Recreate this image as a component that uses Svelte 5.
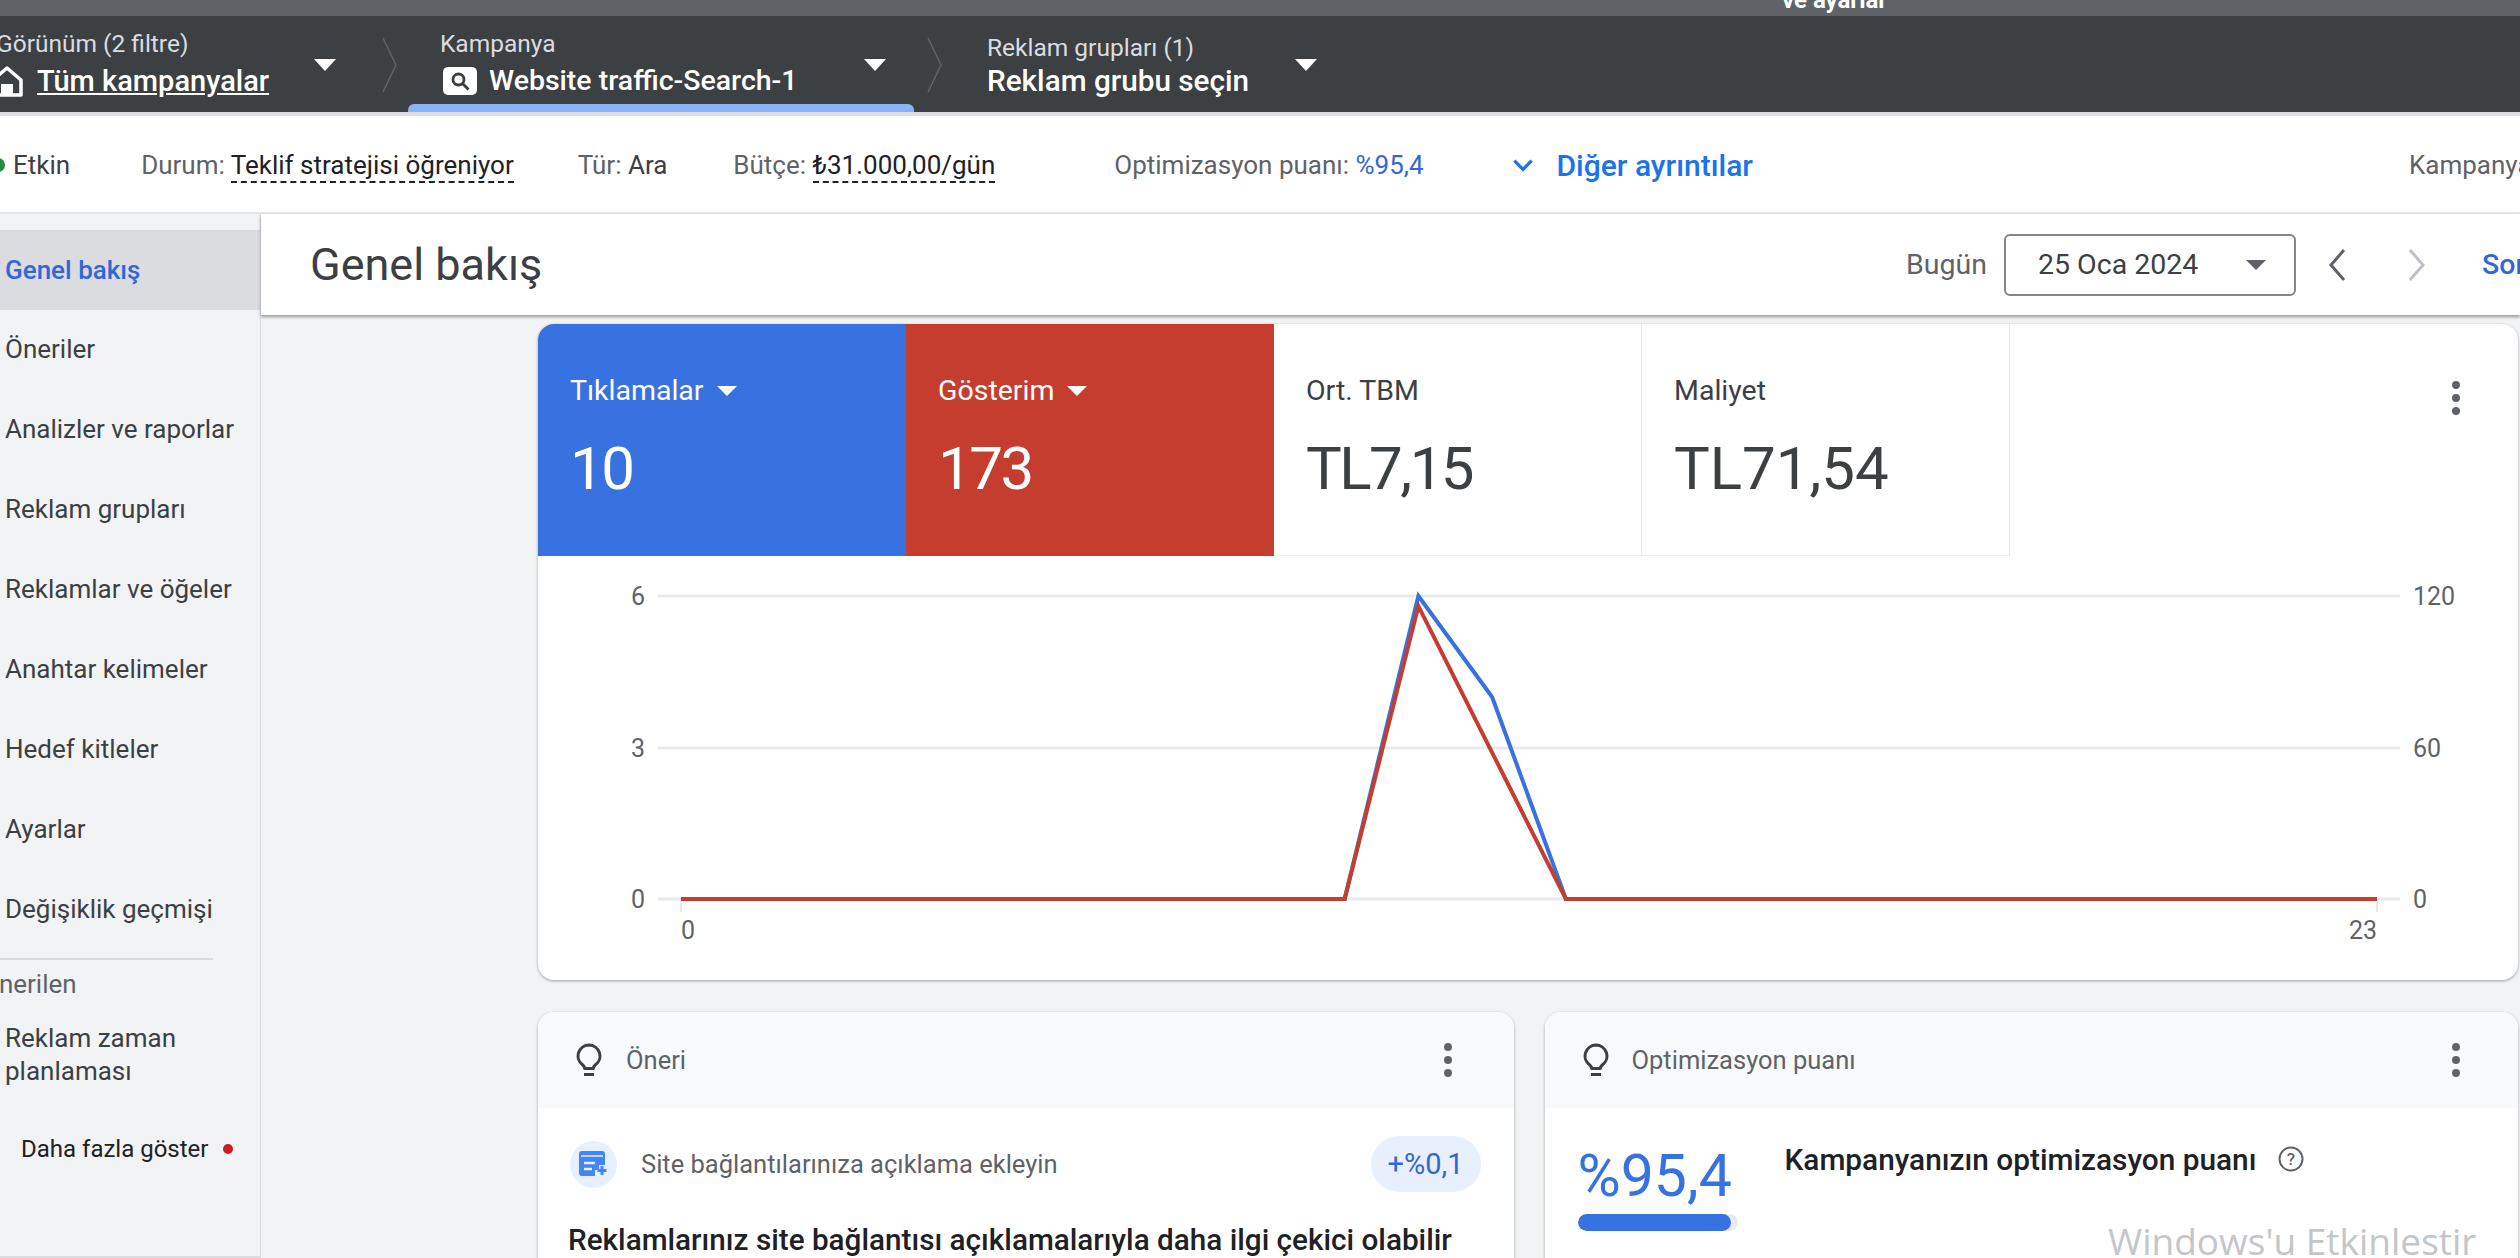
<script lang="ts">
	const navItems = [
		'Öneriler',
		'Analizler ve raporlar',
		'Reklam grupları',
		'Reklamlar ve öğeler',
		'Anahtar kelimeler',
		'Hedef kitleler',
		'Ayarlar',
		'Değişiklik geçmişi',
	];

	const step = (2377 - 681) / 23;
	const xAt = (i: number) => 681 + i * step;
	// saatlik değerler, sol eksen 0-6 (tıklama) / sağ eksen 0-120 (gösterim)
	const yAt = (v: number) => 899 - v * (303 / 6);
	const clicks = Array.from({ length: 24 }, (_, i) => (i === 10 ? 6 : i === 11 ? 4 : 0));
	const impressions = Array.from({ length: 24 }, (_, i) => (i === 10 ? 116 : i === 11 ? 58 : 0));

	const pts = (vals: number[], k = 1) =>
		vals.map((v, i) => `${xAt(i) - 538},${yAt(v * k) - 556}`).join(' ');
</script>

<div class="page">
	<div class="strip"><span>ve ayarlar</span></div>

	<div class="crumbs">
		<div class="crumb first">
			<div class="crumb-text">
				<div class="crumb-label">Görünüm (2 filtre)</div>
				<div class="crumb-value">
					<svg viewBox="0 0 34 32" width="34" height="32"><path d="M17 3 3 15v15h28V15z" fill="none" stroke="#fff" stroke-width="3.500" stroke-linejoin="round" /><path d="M11 30V19h12v11" fill="#fff" /></svg>
					<u>Tüm kampanyalar</u>
				</div>
			</div>
			<i class="caret"></i>
		</div>
		<svg class="sep" viewBox="0 0 15 56" width="15" height="56"><path d="M1 1 14 28 1 55" fill="none" stroke="#5f6368" stroke-width="1.500" /></svg>
		<div class="crumb second">
			<div class="crumb-text">
				<div class="crumb-label">Kampanya</div>
				<div class="crumb-value">
					<svg viewBox="0 0 34 28" width="34" height="28"><rect width="34" height="28" rx="5" fill="#fff" /><circle cx="15.500" cy="12.500" r="5.500" fill="none" stroke="#3c4043" stroke-width="2.800" /><path d="m19.500 16.500 6 6" stroke="#3c4043" stroke-width="3" /></svg>
					<span>Website traffic-Search-1</span>
				</div>
			</div>
			<i class="caret"></i>
		</div>
		<svg class="sep" viewBox="0 0 15 56" width="15" height="56"><path d="M1 1 14 28 1 55" fill="none" stroke="#5f6368" stroke-width="1.500" /></svg>
		<div class="crumb third">
			<div class="crumb-text">
				<div class="crumb-label">Reklam grupları (1)</div>
				<div class="crumb-value"><span>Reklam grubu seçin</span></div>
			</div>
			<i class="caret"></i>
		</div>
	</div>

	<div class="info">
		<span class="dot"></span>
		<span class="etkin">Etkin</span>
		<span class="durum"><em>Durum:</em> <b class="dashed">Teklif stratejisi öğreniyor</b></span>
		<span class="tur"><em>Tür:</em> Ara</span>
		<span class="butce"><em>Bütçe:</em> <b class="dashed">₺31.000,00/gün</b></span>
		<span class="opt"><em>Optimizasyon puanı:</em> <a href="#o">%95,4</a></span>
		<svg class="more-icon" viewBox="0 0 24 24" width="26" height="26"><path d="M4 8l8 8 8-8" fill="none" stroke="#1a73e8" stroke-width="3" /></svg>
		<a class="more" href="#m">Diğer ayrıntılar</a>
		<span class="kamp"><em>Kampanya</em></span>
	</div>

	<div class="body">
		<nav>
			<a class="nav-item active" href="#g">Genel bakış</a>
			{#each navItems as item}
				<a class="nav-item" href="#n">{item}</a>
			{/each}
			<div class="divider"></div>
			<div class="nav-head">Önerilen</div>
			<a class="nav-two" href="#r">Reklam zaman<br />planlaması</a>
			<a class="nav-more" href="#d">Daha fazla göster <i></i></a>
		</nav>

		<main>
			<header>
				<h1>Genel bakış</h1>
				<span class="today">Bugün</span>
				<div class="date"><span>25 Oca 2024</span><i class="caret dark"></i></div>
				<svg class="chev" viewBox="0 0 24 40" width="24" height="40"><path d="M19 5 6 20l13 15" fill="none" stroke="#5f6368" stroke-width="3" /></svg>
				<svg class="chev next" viewBox="0 0 24 40" width="24" height="40"><path d="M5 5l13 15L5 35" fill="none" stroke="#bdc1c6" stroke-width="3" /></svg>
				<a class="son" href="#s">Son</a>
			</header>

			<div class="content">
				<section class="card chart-card">
					<div class="tiles">
						<div class="tile blue">
							<div class="tile-label">Tıklamalar <i class="caret"></i></div>
							<div class="tile-value">10</div>
						</div>
						<div class="tile red">
							<div class="tile-label">Gösterim <i class="caret"></i></div>
							<div class="tile-value">173</div>
						</div>
						<div class="tile plain">
							<div class="tile-label">Ort. TBM</div>
							<div class="tile-value">TL7,15</div>
						</div>
						<div class="tile plain">
							<div class="tile-label">Maliyet</div>
							<div class="tile-value wide">TL71,54</div>
						</div>
						<svg class="kebab tiles-kebab" viewBox="0 0 10 36" width="10" height="36"><circle cx="5" cy="5" r="4" /><circle cx="5" cy="18" r="4" /><circle cx="5" cy="31" r="4" /></svg>
					</div>
					<svg class="chart" viewBox="0 0 1979 424" width="1979" height="424">
						{#each [596, 748, 899] as y}
							<line x1="120" x2="1862" y1={y - 556} y2={y - 556} stroke="#e8eaed" stroke-width="3" />
						{/each}
						<line x1="143" x2="143" y1="343" y2="356" stroke="#e8eaed" stroke-width="2" />
						<line x1="1839" x2="1839" y1="343" y2="356" stroke="#e8eaed" stroke-width="2" />
						<g class="axis">
							<text x="107" y="49" text-anchor="end">6</text>
							<text x="107" y="201" text-anchor="end">3</text>
							<text x="107" y="352" text-anchor="end">0</text>
							<text x="1875" y="49">120</text>
							<text x="1875" y="201">60</text>
							<text x="1875" y="352">0</text>
							<text x="150" y="383" text-anchor="middle">0</text>
							<text x="1839" y="383" text-anchor="end">23</text>
						</g>
						<polyline points={pts(clicks)} fill="none" stroke="#3871e0" stroke-width="4" />
						<polyline points={pts(impressions, 0.05)} fill="none" stroke="#c53d2e" stroke-width="4" />
					</svg>
				</section>

				<div class="lower">
					<section class="card small left">
						<div class="small-head">
							<svg class="bulb" viewBox="0 0 26 34" width="26" height="34"><path d="M13 2a11 11 0 0 0-6.500 19.800c1.300 1 2 2.200 2.200 3.700h8.600c.2-1.500.9-2.700 2.200-3.700A11 11 0 0 0 13 2z" fill="none" stroke="#3c4043" stroke-width="3" stroke-linejoin="round" /><path d="M8 31.500h10" stroke="#3c4043" stroke-width="3" /></svg>
							<span>Öneri</span>
							<svg class="kebab" viewBox="0 0 10 36" width="10" height="36"><circle cx="5" cy="5" r="4" /><circle cx="5" cy="18" r="4" /><circle cx="5" cy="31" r="4" /></svg>
						</div>
						<div class="small-body">
							<div class="tip">
								<span class="tip-icon">
									<svg viewBox="0 0 30 26" width="30" height="26"><path d="M3 0h20a3 3 0 0 1 3 3v11h-6v5h-4v6H3a3 3 0 0 1-3-3V3a3 3 0 0 1 3-3z" fill="#4285f4" /><path d="M2 5h22" stroke="#e8f0fe" stroke-width="1.500" /><path d="M5 12h11M5 18h8" stroke="#e8f0fe" stroke-width="2.600" /><path d="M23 15v9M18.500 19.500h9" stroke="#4285f4" stroke-width="3" /></svg>
								</span>
								<span class="tip-text">Site bağlantılarınıza açıklama ekleyin</span>
								<span class="chip">+%0,1</span>
							</div>
							<div class="headline">Reklamlarınız site bağlantısı açıklamalarıyla daha ilgi çekici olabilir</div>
						</div>
					</section>

					<section class="card small right">
						<div class="small-head">
							<svg class="bulb" viewBox="0 0 26 34" width="26" height="34"><path d="M13 2a11 11 0 0 0-6.500 19.800c1.300 1 2 2.200 2.200 3.700h8.600c.2-1.500.9-2.700 2.200-3.700A11 11 0 0 0 13 2z" fill="none" stroke="#3c4043" stroke-width="3" stroke-linejoin="round" /><path d="M8 31.500h10" stroke="#3c4043" stroke-width="3" /></svg>
							<span>Optimizasyon puanı</span>
							<svg class="kebab" viewBox="0 0 10 36" width="10" height="36"><circle cx="5" cy="5" r="4" /><circle cx="5" cy="18" r="4" /><circle cx="5" cy="31" r="4" /></svg>
						</div>
						<div class="score-body">
							<div class="score">
								<div class="score-num">%95,4</div>
								<div class="score-bar"><div class="score-fill" style="width: 96%"></div></div>
							</div>
							<div class="score-title">
								Kampanyanızın optimizasyon puanı
								<svg viewBox="0 0 28 28" width="28" height="28"><circle cx="14" cy="14" r="11.500" fill="none" stroke="#5f6368" stroke-width="2" /><text x="14" y="20" text-anchor="middle" font-size="17" fill="#5f6368">?</text></svg>
							</div>
						</div>
					</section>
				</div>
			</div>
		</main>
	</div>

	<div class="watermark">Windows'u Etkinlestir</div>
</div>

<style>
	:global(body) {
		margin: 0;
		background: #f1f3f4;
		overflow: hidden;
	}

	.page {
		position: relative;
		width: 2520px;
		height: 1258px;
		overflow: hidden;
		font-family: Roboto, "Liberation Sans", sans-serif;
		font-size: 26px;
		color: #3c4043;
		display: flex;
		flex-direction: column;
	}

	a { text-decoration: none; }

	.caret {
		display: inline-block;
		width: 0;
		height: 0;
		border-left: 11px solid transparent;
		border-right: 11px solid transparent;
		border-top: 12px solid #fff;
	}
	.caret.dark {
		border-left-width: 10px;
		border-right-width: 10px;
		border-top: 10px solid #5f6368;
	}

	/* ── Üst şerit ── */
	.strip {
		height: 16px;
		background: #5f6368;
		color: #fff;
		font-weight: 700;
		font-size: 24px;
		padding-left: 1782px;
		overflow: hidden;
		flex-shrink: 0;
	}
	.strip span { display: block; line-height: 0; }

	/* ── Breadcrumb ── */
	.crumbs {
		height: 96px;
		background: #3c4043;
		color: #fff;
		display: flex;
		align-items: flex-start;
		flex-shrink: 0;
		margin-left: -4px;
	}
	.crumb {
		display: flex;
		align-items: flex-start;
		position: relative;
		height: 96px;
		box-sizing: border-box;
	}
	.crumb-text { padding-top: 14px; }
	.crumb-label {
		color: #dadce0;
		font-size: 24.500px;
		line-height: 28px;
		white-space: nowrap;
	}
	.crumb-value {
		display: flex;
		align-items: center;
		gap: 12px;
		font-size: 29px;
		font-weight: 500;
		line-height: 36px;
		margin-top: 5px;
		white-space: nowrap;
	}
	.crumb .caret { margin-top: 43px; }
	.crumb.first { width: 386px; }
	.crumb.first .crumb-value { gap: 13px; margin-left: -6px; }
	.crumb.first .caret { margin-left: 45px; }
	.crumb.second {
		margin-left: 11px;
		width: 506px;
		padding-left: 32px;
	}
	.crumb.second::after {
		content: '';
		position: absolute;
		left: 0;
		right: 0;
		bottom: 0;
		height: 8px;
		background: #8ab4f8;
		border-radius: 6px 6px 0 0;
	}
	.crumb.second .crumb-value { margin-left: 3px; font-size: 28.500px; }
	.crumb.second .caret { margin-left: 66px; }
	.crumb.third { margin-left: 45px; }
	.crumb.third .crumb-text { padding-top: 18px; }
	.crumb.third .crumb-value { margin-top: 1px; font-size: 29.700px; }
	.crumb.third .caret { margin-left: 46px; }
	.sep { margin-top: 21px; flex-shrink: 0; }
	.crumb.second + .sep { margin-left: 13px; }

	/* ── Bilgi satırı ── */
	.info {
		margin-top: 4px;
		height: 96px;
		box-sizing: content-box;
		background: #fff;
		border-bottom: 2px solid #e3e5e8;
		display: flex;
		align-items: center;
		white-space: nowrap;
		flex-shrink: 0;
		box-shadow: 0 -4px 0 #dadce0;
	}
	.info > * { position: relative; top: 1px; }
	.info em { font-style: normal; color: #5f6368; }
	.info b { font-weight: 400; color: #202124; }
	.info a { color: #3367d6; }
	.dashed { border-bottom: 2px dashed #202124; padding-bottom: 1px; }
	.dot {
		width: 14px;
		height: 14px;
		border-radius: 50%;
		background: #1e8e3e;
		margin-left: -9px;
		flex-shrink: 0;
	}
	.etkin { margin-left: 8px; }
	.durum { margin-left: 71px; }
	.tur { margin-left: 64px; }
	.butce { margin-left: 66px; }
	.opt { margin-left: 119px; }
	.more-icon { margin-left: 86px; flex-shrink: 0; }
	.more { margin-left: 21px; font-size: 30px; font-weight: 500; color: #1a73e8 !important; }
	.kamp { margin-left: 656px; }

	/* ── Gövde ── */
	.body {
		flex: 1;
		min-height: 0;
		display: flex;
	}
	nav {
		width: 261px;
		flex-shrink: 0;
		box-sizing: border-box;
		border-right: 1px solid #dadce0;
		border-bottom: 2px solid #dadce0;
		padding-top: 16px;
		background: #f1f3f4;
	}
	.nav-item {
		display: flex;
		align-items: center;
		height: 79.900px;
		padding-left: 5px;
		color: #3c4043;
		white-space: nowrap;
	}
	.nav-item.active {
		height: 80px;
		margin-bottom: -0.500px;
		background: #dadce0;
		color: #3367d6;
		font-weight: 500;
	}
	.divider {
		width: 213px;
		height: 2px;
		background: #dadce0;
		margin-top: 9px;
	}
	.nav-head {
		margin: 10px 0 0 -19px;
		line-height: 28px;
		color: #5f6368;
	}
	.nav-two {
		display: block;
		margin-top: 24px;
		padding-left: 5px;
		line-height: 33px;
		color: #3c4043;
	}
	.nav-more {
		display: flex;
		align-items: center;
		margin-top: 47px;
		padding-left: 21px;
		color: #202124;
		white-space: nowrap;
		font-size: 24px;
	}
	.nav-more i {
		width: 10px;
		height: 10px;
		border-radius: 50%;
		background: #c5221f;
		margin-left: 15px;
	}

	main {
		flex: 1;
		min-width: 0;
		display: flex;
		flex-direction: column;
	}
	header {
		height: 101px;
		box-sizing: border-box;
		background: #fff;
		box-shadow: 0 2px 3px rgba(60, 64, 67, 0.5);
		display: flex;
		align-items: center;
		padding-left: 49px;
		flex-shrink: 0;
		position: relative;
	}
	h1 {
		margin: 0;
		font-size: 45px;
		font-weight: 400;
		color: #3c4043;
		flex: 1;
	}
	.today { color: #5f6368; margin-right: 17px; font-size: 28.500px; }
	.date {
		width: 292px;
		height: 62px;
		box-sizing: border-box;
		border: 2px solid #80868b;
		border-radius: 6px;
		display: flex;
		align-items: center;
		justify-content: space-between;
		padding: 0 28px 0 32px;
		font-size: 28.500px;
	}
	.chev { margin-left: 29px; flex-shrink: 0; }
	.chev.next { margin-left: 56px; }
	.son { margin-left: 53px; width: 38px; overflow: hidden; color: #3367d6; font-weight: 500; font-size: 28.500px; }

	.content {
		flex: 1;
		min-height: 0;
		padding: 9px 2px 0 277px;
		display: flex;
		flex-direction: column;
		gap: 32px;
		overflow: hidden;
	}
	.card {
		background: #fff;
		border-radius: 16px;
		box-shadow: 0 1px 3px rgba(60, 64, 67, 0.45);
		overflow: hidden;
	}
	.chart-card { height: 656px; flex-shrink: 0; }
	.tiles {
		display: flex;
		height: 232px;
		position: relative;
	}
	.tile {
		width: 368px;
		box-sizing: border-box;
		padding: 52px 0 0 32px;
	}
	.tile.blue { background: #3871e0; color: #fff; }
	.tile.red { background: #c53d2e; color: #fff; }
	.tile.plain {
		border-right: 1px solid #e8eaed;
		border-bottom: 1px solid #e8eaed;
		color: #3c4043;
	}
	.tile-label {
		font-size: 28.500px;
		line-height: 30px;
		display: flex;
		align-items: center;
		gap: 13px;
	}
	.tile .caret {
		border-left-width: 10px;
		border-right-width: 10px;
		border-top-width: 10px;
	}
	.tile-value {
		font-size: 60px;
		letter-spacing: -2.500px;
		line-height: 70px;
		margin-top: 28px;
	}
	.tile-value.wide { letter-spacing: 0; }
	.tile.plain .tile-value { color: #3c4043; }
	.kebab { fill: #5f6368; flex-shrink: 0; }
	.tiles-kebab { position: absolute; right: 57px; top: 56px; }
	.chart { display: block; }
	.axis text { font-size: 25px; fill: #5f6368; font-family: Roboto, sans-serif; }

	.lower {
		display: flex;
		gap: 31px;
		flex: 1;
	}
	.small {
		border-radius: 16px 16px 0 0;
		height: 300px;
		min-width: 0;
	}
	.small.left { flex: 975 0 0; }
	.small.right { flex: 973 0 0; }
	.small-head {
		height: 96px;
		background: #f8f9fa;
		display: flex;
		align-items: center;
		padding: 0 61px 0 38px;
		gap: 24px;
		color: #5f6368;
		font-size: 25.500px;
	}
	.small.right .small-head { padding-right: 57px; gap: 23px; }
	.small-head span { flex: 1; }
	.small-body { padding: 28px 33px 0 32px; }
	.tip { display: flex; align-items: center; }
	.tip-icon {
		width: 47px;
		height: 47px;
		border-radius: 50%;
		background: #e8f0fe;
		display: flex;
		align-items: center;
		justify-content: center;
		flex-shrink: 0;
	}
	.tip-text { flex: 1; margin-left: 24px; color: #5f6368; font-size: 25.500px; }
	.chip {
		width: 110px;
		height: 56px;
		border-radius: 28px;
		background: #e8f0fe;
		color: #3367d6;
		font-size: 29px;
		display: flex;
		align-items: center;
		justify-content: center;
	}
	.headline {
		margin: 30px 0 0 -2px;
		font-size: 29.700px;
		font-weight: 500;
		color: #202124;
		white-space: nowrap;
	}
	.score-body { display: flex; padding: 34px 0 0 33px; }
	.score { width: 160px; }
	.score-num { font-size: 59px; line-height: 64px; color: #3871e0; margin-top: 2px; }
	.score-bar { height: 17px; border-radius: 9px; background: #e8eaed; margin-top: 6px; overflow: hidden; }
	.score-fill { height: 100%; border-radius: 9px; background: #3871e0; }
	.score-title {
		margin-left: 47px;
		margin-top: -1px;
		font-size: 29.800px;
		font-weight: 500;
		color: #202124;
		display: flex;
		align-items: center;
		gap: 21px;
		height: 36px;
		white-space: nowrap;
	}

	.watermark {
		position: absolute;
		left: 2108px;
		top: 1218px;
		font-size: 37px;
		line-height: 46px;
		color: #c4c6c9;
		white-space: nowrap;
		font-family: "Open Sans", sans-serif;
	}
</style>
